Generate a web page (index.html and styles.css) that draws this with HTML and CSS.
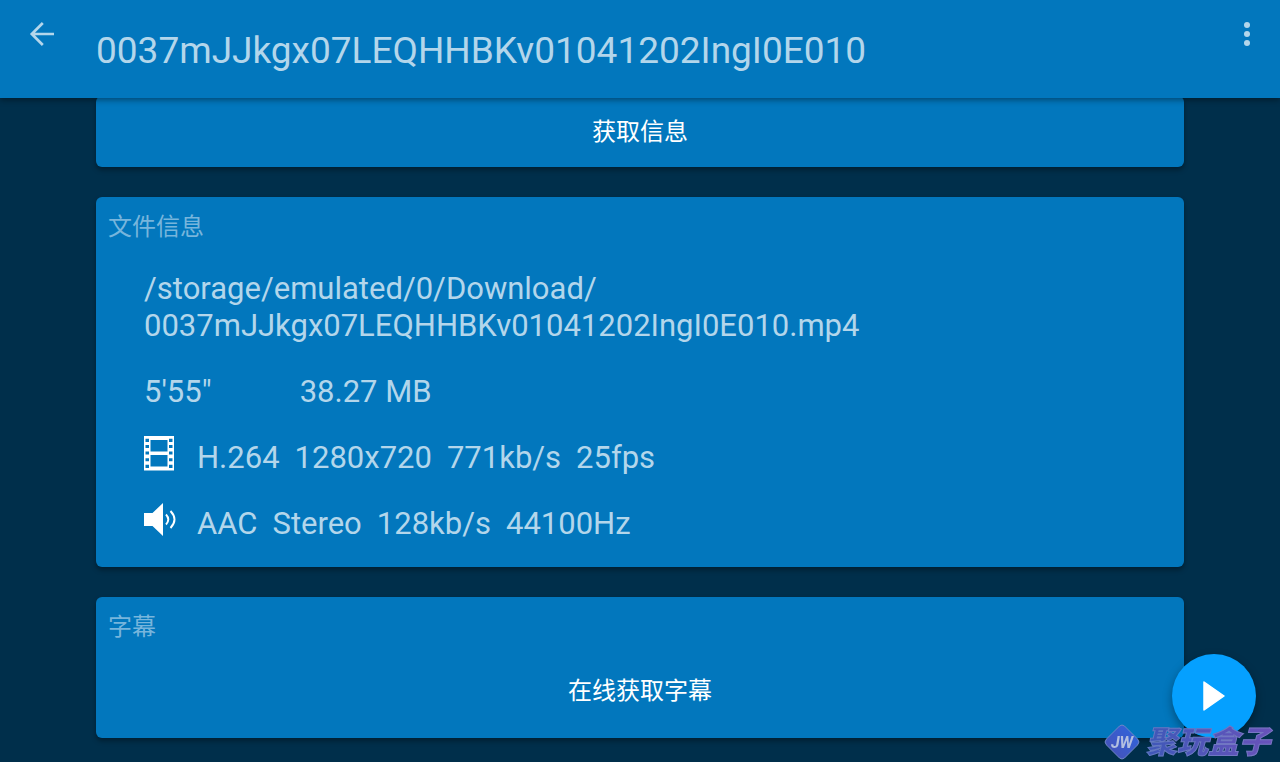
FILE: index.html
```html
<!DOCTYPE html>
<html lang="zh-CN">
<head>
<meta charset="utf-8">
<meta name="viewport" content="width=device-width, initial-scale=1">
<title>0037mJJkgx07LEQHHBKv01041202IngI0E010</title>
<link rel="stylesheet" href="styles.css">
</head>
<body>
<header class="app-bar">
  <button class="icon-button" type="button" aria-label="返回">
    <svg width="26" height="26" viewBox="0 0 26 26" fill="none" stroke="currentColor" stroke-width="2.7"><path d="M25 13H3M13.800 2 2.800 13l11 11"/></svg>
  </button>
  <h1 class="title">0037mJJkgx07LEQHHBKv01041202IngI0E010</h1>
  <button class="icon-button menu-button" type="button" aria-label="更多">
    <svg width="26" height="26" viewBox="0 0 26 26" fill="currentColor"><circle cx="13" cy="4" r="3"/><circle cx="13" cy="13" r="3"/><circle cx="13" cy="22" r="3"/></svg>
  </button>
</header>
<main class="content">
  <section class="card">
    <button class="card-action" type="button">获取信息</button>
  </section>
  <section class="card">
    <h2 class="card-label">文件信息</h2>
    <div class="details">
      <p class="row">/storage/emulated/0/Download/<br>0037mJJkgx07LEQHHBKv01041202IngI0E010.mp4</p>
      <p class="row facts"><span>5'55"</span><span>38.27 MB</span></p>
      <p class="row media">
        <svg class="media-icon" width="32" height="36" viewBox="0 0 32 36" fill="#fff" fill-rule="evenodd" aria-hidden="true"><path d="M0 0h30v34.500H0zM6.500 4v11.500h17V4zM6.500 19v11.500h17V19zM1.500 2.700V6H5V2.700zM1.500 9v3H5V9zM1.500 15.500v3H5v-3zM1.500 22.300v3H5v-3zM1.500 28.700V32H5v-3.300zM25 2.700V6h3.500V2.700zM25 9v3h3.500V9zM25 15.500v3h3.500v-3zM25 22.300v3h3.500v-3zM25 28.700V32h3.500v-3.300z"/></svg>
        <span>H.264</span><span>1280x720</span><span>771kb/s</span><span>25fps</span>
      </p>
      <p class="row media">
        <svg class="media-icon" width="32" height="36" viewBox="0 0 32 36" aria-hidden="true"><path fill="#fff" d="M0 11h8.500L19 1v33L8.500 24H0z"/><path fill="none" stroke="#fff" stroke-width="1.900" d="M22 12.500q4.600 5 0 10M26.500 9q8 8.500 0 17"/></svg>
        <span>AAC</span><span>Stereo</span><span>128kb/s</span><span>44100Hz</span>
      </p>
    </div>
  </section>
  <section class="card">
    <h2 class="card-label">字幕</h2>
    <button class="card-action subtitle-action" type="button">在线获取字幕</button>
  </section>
</main>
<button class="fab" type="button" aria-label="播放">
  <svg width="24" height="30" viewBox="0 0 24 30" fill="#fff" stroke="#fff" stroke-width="1.500" stroke-linejoin="round"><path d="M2 1v28l20-14z"/></svg>
</button>
<div class="watermark">
  <span class="logo">
    <svg width="36" height="36" viewBox="0 0 36 36" aria-hidden="true"><defs><linearGradient id="gem" x1="0" y1="1" x2="1" y2="0"><stop offset="0" stop-color="#4a4fb4"/><stop offset="1" stop-color="#2c66e0"/></linearGradient></defs><path fill="url(#gem)" stroke="#6f86c4" stroke-width="1" d="M15.500 2Q18 0 20.500 2L33.500 15q3 3 0 6L20.500 34Q18 36 15.500 34L2.500 21q-3-3 0-6z"/></svg>
    <span class="logo-text">JW</span>
  </span>
  <span class="brand">聚玩盒子</span>
</div>
</body>
</html>
```
FILE: styles.css
```css
* { box-sizing: border-box; }

body {
  margin: 0;
  min-height: 100vh;
  background: #002f4b;
  color: #b3d6eb;
  font-family: Roboto, "Noto Sans CJK SC", sans-serif;
}

button {
  border: 0;
  padding: 0;
  background: none;
  color: inherit;
  font: inherit;
  cursor: pointer;
}

h1, h2, p { margin: 0; font-weight: 400; }

svg { display: block; }

.app-bar {
  position: relative;
  z-index: 1;
  display: flex;
  align-items: flex-start;
  height: 98px;
  background: #0277bd;
  box-shadow: 0 2px 6px rgba(0, 0, 0, .4);
}

.icon-button {
  display: flex;
  align-items: center;
  justify-content: center;
  flex: none;
  width: 84px;
  height: 68px;
}

.menu-button { width: 66px; }

.title {
  flex: 1;
  min-width: 0;
  padding: 27px 0 0 12px;
  overflow: hidden;
  font-size: 37px;
  line-height: 48px;
  white-space: nowrap;
}

.content {
  display: flex;
  flex-direction: column;
  gap: 30px;
  margin-top: -2px;
  padding: 0 96px 24px;
}

.card {
  border-radius: 6px;
  background: #0277bd;
  box-shadow: 0 3px 5px rgba(0, 0, 0, .35);
}

.card-action {
  display: block;
  width: 100%;
  height: 71px;
  color: #fff;
  font-size: 24px;
  line-height: 30px;
}

.card-label {
  padding: 15px 12px 0;
  color: #77b5dc;
  font-size: 24px;
  line-height: 30px;
}

.details {
  display: flex;
  flex-direction: column;
  gap: 29px;
  padding: 28px 48px 25px;
  font-size: 31px;
  line-height: 37px;
}

.facts { display: flex; gap: 88px; }

.media { display: flex; gap: 15px; }

.media-icon { flex: none; margin: -3px 6px 0 0; }

.subtitle-action { height: 96px; padding-top: 2px; }

.fab {
  position: fixed;
  right: 24px;
  bottom: 24px;
  z-index: 2;
  display: flex;
  align-items: center;
  justify-content: center;
  width: 84px;
  height: 84px;
  border-radius: 50%;
  background: #05a0ff;
  box-shadow: 0 4px 10px rgba(0, 0, 0, .35);
}

.watermark {
  position: fixed;
  right: 4px;
  bottom: 0;
  z-index: 3;
  display: flex;
  align-items: center;
  gap: 6px;
  font-style: italic;
  pointer-events: none;
}

.logo {
  display: grid;
  place-items: center;
}

.logo > * { grid-area: 1 / 1; }

.logo-text {
  color: #b3bfe0;
  font-size: 16px;
  font-weight: 700;
}

.brand {
  padding: 0 6px 4px 0;
  background: linear-gradient(90deg, #3e58b8, #6a52ba);
  background-clip: text;
  color: transparent;
  font-family: "Noto Sans CJK SC", sans-serif;
  font-size: 31px;
  font-weight: 900;
  line-height: 36px;
  -webkit-text-stroke: 1px rgba(150, 170, 210, .4);
}
```
